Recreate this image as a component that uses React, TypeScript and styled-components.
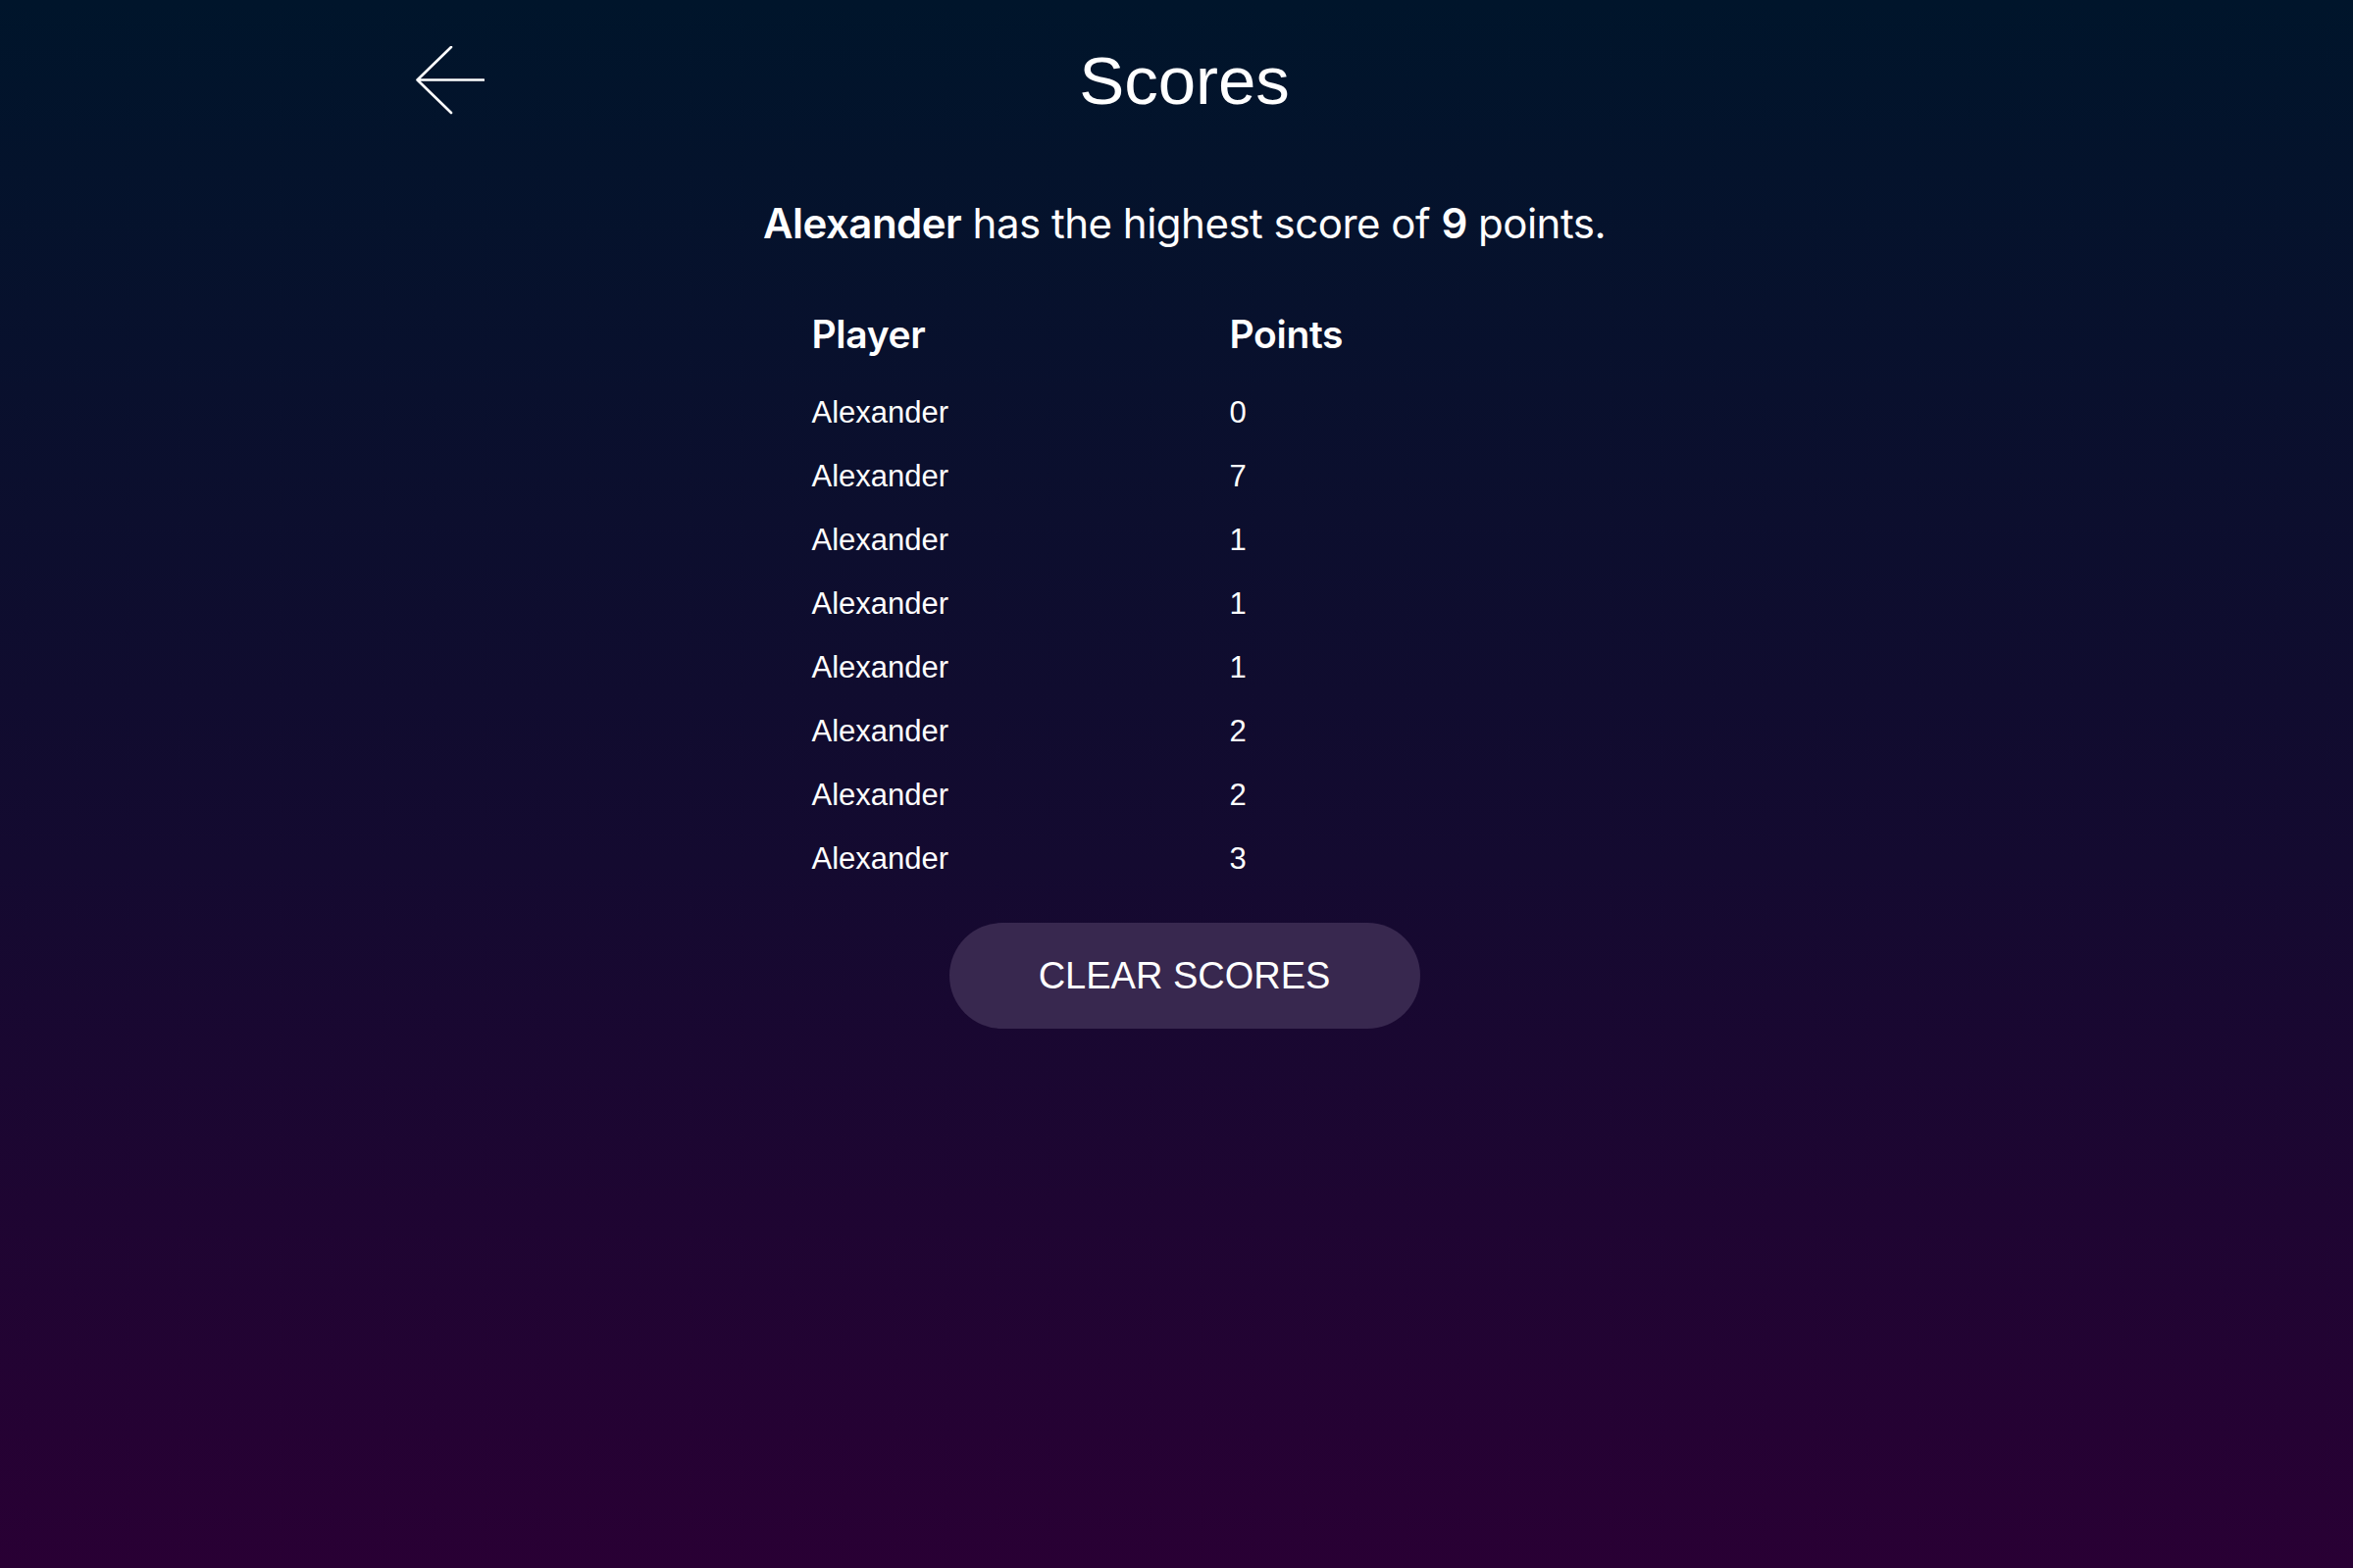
import React from "react";
import styled, { createGlobalStyle } from "styled-components";

const GlobalStyle = createGlobalStyle`
  html, body {
    margin: 0;
    padding: 0;
  }
  body {
    min-height: 100vh;
    background: linear-gradient(180deg, #00152b 0%, #140a30 55%, #290034 100%);
    background-attachment: fixed;
    color: #ffffff;
    font-family: "Liberation Sans", Arial, sans-serif;
  }
`;

const Page = styled.main`
  min-height: 100vh;
  box-sizing: border-box;
  padding-left: 16px;
  display: flex;
  flex-direction: column;
  align-items: center;
`;

const Header = styled.header`
  width: 1568px;
  padding-top: 46px;
  display: grid;
  grid-template-columns: 1fr auto 1fr;
  align-items: center;
`;

const BackButton = styled.button`
  justify-self: start;
  width: 70px;
  height: 70px;
  padding: 0;
  border: none;
  background: transparent;
  cursor: pointer;
  display: flex;
`;

const Title = styled.h1`
  margin: 0;
  padding-top: 2px;
  font-family: "Liberation Sans", Arial, sans-serif;
  font-weight: 400;
  font-size: 69px;
  line-height: 70px;
  color: #ffffff;
`;

const Summary = styled.p`
  margin: 85px 0 0;
  font-family: Inter, "Noto Sans", sans-serif;
  font-size: 42px;
  line-height: 50px;
  letter-spacing: -0.012em;
  font-weight: 400;
  color: #ffffff;
  b {
    font-weight: 600;
  }
`;

const Table = styled.div`
  margin-top: 66px;
  width: 760px;
  display: grid;
  grid-template-columns: 426px 334px;
`;

const HeadCell = styled.div`
  font-family: Inter, "Noto Sans", sans-serif;
  font-weight: 600;
  font-size: 39px;
  line-height: 44px;
  letter-spacing: -0.008em;
  margin-bottom: 25px;
`;

const Cell = styled.div`
  font-family: "Liberation Sans", Arial, sans-serif;
  font-size: 31px;
  line-height: 65px;
`;

const ClearButton = styled.button`
  margin-top: 33px;
  width: 480px;
  height: 108px;
  border: none;
  border-radius: 54px;
  background: #38284f;
  color: #ffffff;
  font-family: "Liberation Sans", Arial, sans-serif;
  font-size: 38px;
  cursor: pointer;
`;

const scores = [0, 7, 1, 1, 1, 2, 2, 3];

export default function App() {
  return (
    <>
      <GlobalStyle />
      <Page>
        <Header>
          <BackButton aria-label="Back">
            <svg width="70" height="70" viewBox="0 0 70 70" fill="none">
              <path
                d="M36 1 L1.5 34.5 L36 68 M1.5 34.5 H69"
                stroke="#ffffff"
                strokeWidth="2.6"
                strokeLinecap="round"
                strokeLinejoin="round"
              />
            </svg>
          </BackButton>
          <Title>Scores</Title>
          <span />
        </Header>
        <Summary>
          <b>Alexander</b> has the highest score of <b>9</b> points.
        </Summary>
        <Table>
          <HeadCell>Player</HeadCell>
          <HeadCell>Points</HeadCell>
          {scores.map((s, i) => (
            <React.Fragment key={i}>
              <Cell>Alexander</Cell>
              <Cell>{s}</Cell>
            </React.Fragment>
          ))}
        </Table>
        <ClearButton>CLEAR SCORES</ClearButton>
      </Page>
    </>
  );
}
